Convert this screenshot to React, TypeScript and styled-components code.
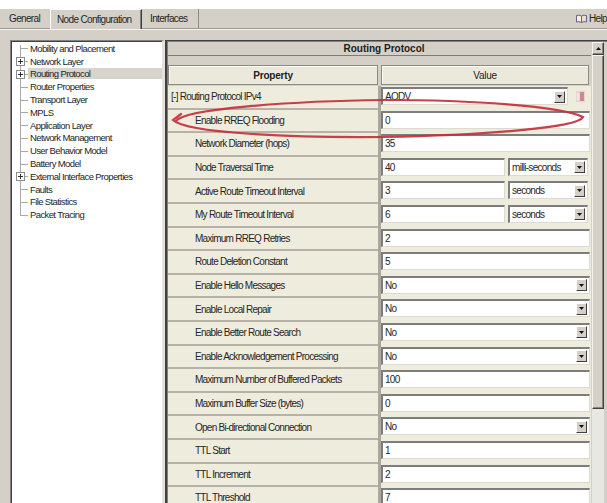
import React from "react";
import styled, { createGlobalStyle } from "styled-components";

const UI = `"Liberation Sans", Arial, sans-serif`;

const GlobalStyle = createGlobalStyle`
  html, body { margin: 0; padding: 0; background: #d4d0c8; }
  #root { width: 607px; height: 503px; }
`;

const Window = styled.div`
  position: relative;
  width: 607px;
  height: 503px;
  overflow: hidden;
  display: flex;
  flex-direction: column;
  background: #d4d0c8;
  font-family: ${UI};
  font-size: 9.5px;
  letter-spacing: -0.62px;
  color: #262626;
`;

const TopStrip = styled.div`
  flex: none;
  height: 9px;
  background: #ffffff;
`;

/* ---------- tab strip ---------- */

const TabBar = styled.div`
  flex: none;
  height: 19px;
  display: flex;
  align-items: stretch;
  border-bottom: 1px solid #9b988f;
`;

const Tab = styled.div<{ $active?: boolean; $w: number; $pad: number }>`
  position: relative;
  box-sizing: border-box;
  width: ${(p) => p.$w}px;
  padding-left: ${(p) => p.$pad}px;
  display: flex;
  align-items: center;
  font-size: 10px;
  letter-spacing: -0.65px;
  white-space: nowrap;
  background: #d4d0c8;
  ${(p) =>
    p.$active
      ? `
    border-top: 1px solid #ffffff;
    border-left: 1px solid #ffffff;
    border-right: 1px solid #404040;
    box-shadow: inset -1px 0 0 #808080;
    margin-bottom: -1px;
  `
      : `
    border-right: 1px solid #8f8c84;
  `}
`;

const PlainTab = styled(Tab)`
  border-right: none;
`;

const TabFill = styled.div`
  flex: 1;
`;

const HelpLink = styled.div`
  display: flex;
  align-items: center;
  gap: 2px;
  font-size: 10px;
  letter-spacing: -0.65px;
  white-space: nowrap;
`;

/* ---------- body ---------- */

const Body = styled.div`
  flex: 1;
  min-height: 0;
  display: flex;
  border-top: 1px solid #f3f2ec;
  padding: 10px 0 0 10px;
`;

const TreePanel = styled.div`
  flex: none;
  box-sizing: border-box;
  width: 155px;
  background: #ffffff;
  border-top: 1px solid #808080;
  border-left: 1px solid #808080;
  border-right: 3px solid #e4e2da;
  box-shadow: inset 1px 1px 0 #404040;
  padding: 1px 0 0 1px;
  display: flex;
  flex-direction: column;
`;

const TreeRow = styled.div`
  height: 12.8px;
  display: flex;
  align-items: center;
`;

const Connector = styled.div<{ $first?: boolean; $last?: boolean }>`
  position: relative;
  flex: none;
  width: 16px;
  align-self: stretch;

  &::before {
    content: "";
    position: absolute;
    left: 8px;
    top: ${(p) => (p.$first ? "3px" : "0")};
    bottom: ${(p) => (p.$last ? "50%" : "0")};
    border-left: 1px solid #a9a9a9;
  }

  &::after {
    content: "";
    position: absolute;
    left: 8px;
    top: 50%;
    width: 8px;
    border-top: 1px solid #a9a9a9;
  }
`;

const Expander = styled.svg`
  position: absolute;
  left: 4px;
  top: 50%;
  margin-top: -4px;
  z-index: 1;
`;

const TreeLabel = styled.div<{ $selected?: boolean }>`
  flex: 1;
  height: 11px;
  line-height: 11px;
  padding-left: 2px;
  white-space: nowrap;
  color: #262626;
  background: ${(p) => (p.$selected ? "#d7d4cc" : "transparent")};
`;

/* ---------- property sheet ---------- */

const RightPanel = styled.div`
  flex: 1;
  min-width: 0;
  display: flex;
  border-top: 1px solid #404040;
  border-left: 2px solid #404040;
  box-shadow: inset 1px 1px 0 #808080;
  padding: 1px 0 0 1px;
`;

const Sheet = styled.div`
  flex: 1;
  min-width: 0;
  display: flex;
  flex-direction: column;
`;

const TitleBar = styled.div`
  flex: none;
  height: 13px;
  border-bottom: 1px solid #7f7c74;
  display: flex;
  align-items: center;
  justify-content: center;
  padding-left: 9px;
  font-weight: bold;
  font-size: 10px;
  letter-spacing: 0;
  color: #202020;
`;

const HeaderRow = styled.div`
  flex: none;
  margin-top: 9px;
  height: 20px;
  display: grid;
  grid-template-columns: 210px 1fr;
  column-gap: 3px;
  padding-right: 2px;
`;

const HeaderCell = styled.div<{ $bold?: boolean }>`
  box-sizing: border-box;
  display: flex;
  align-items: center;
  justify-content: center;
  background: #ebe9dc;
  border: 1px solid #8d8a80;
  box-shadow: inset 1px 1px 0 #fbfaf4;
  font-size: 10px;
  letter-spacing: ${(p) => (p.$bold ? "-0.2px" : "-0.3px")};
  font-weight: ${(p) => (p.$bold ? "bold" : "normal")};
  color: #222;
`;

const Rows = styled.div`
  flex: none;
  margin-top: 1px;
  display: flex;
  flex-direction: column;
`;

const Row = styled.div`
  flex: none;
  height: 23.6px;
  display: grid;
  grid-template-columns: 210px 1fr;
  column-gap: 3px;
  background: #aaa79b;
`;

const PropCell = styled.div<{ $group?: boolean }>`
  display: flex;
  align-items: center;
  padding-left: ${(p) => (p.$group ? "3px" : "27px")};
  background: #eeecdd;
  border-bottom: 2px solid #b6b3a6;
  white-space: nowrap;
  font-size: 10px;
  letter-spacing: -0.74px;
  color: #262626;
`;

const ValueCell = styled.div`
  display: flex;
  align-items: flex-start;
  gap: 3px;
  padding: 1px 1px 0 0;
  background: #eeecdd;
`;

const Field = styled.div<{ $w?: number }>`
  box-sizing: border-box;
  height: 18px;
  ${(p) => (p.$w ? `width: ${p.$w}px; flex: none;` : "flex: 1;")}
  min-width: 0;
  display: flex;
  align-items: center;
  padding-left: 2px;
  background: #ffffff;
  border-top: 2px solid #7d7d7d;
  border-left: 2px solid #7d7d7d;
  border-bottom: 1px solid #dcdad2;
  border-right: 1px solid #dcdad2;
  white-space: nowrap;
  font-size: 10px;
  letter-spacing: -0.7px;
  color: #262626;
`;

const FieldText = styled.span`
  flex: 1;
  overflow: hidden;
`;

const DropButton = styled.div`
  flex: none;
  box-sizing: border-box;
  width: 11px;
  height: 12px;
  margin-right: 2px;
  display: flex;
  align-items: center;
  justify-content: center;
  background: #d4d0c8;
  border-top: 1px solid #ffffff;
  border-left: 1px solid #ffffff;
  border-right: 1px solid #404040;
  border-bottom: 1px solid #404040;
`;

const SideIcon = styled.div`
  flex: 1;
  display: flex;
  justify-content: center;
  padding-top: 4px;
`;

/* ---------- scroll bar ---------- */

const ScrollColumn = styled.div`
  flex: none;
  width: 12px;
  margin: 0 3px 0 1px;
  display: flex;
  flex-direction: column;
`;

const Bevel = styled.div`
  box-sizing: border-box;
  background: #d4d0c8;
  border-top: 1px solid #f6f5f0;
  border-left: 1px solid #f6f5f0;
  border-right: 1px solid #404040;
  border-bottom: 1px solid #404040;
  box-shadow: inset -1px -1px 0 #8a877f;
`;

const ScrollButton = styled(Bevel)`
  flex: none;
  height: 13px;
  display: flex;
  align-items: center;
  justify-content: center;
`;

const ScrollThumb = styled(Bevel)`
  flex: none;
  height: 354px;
`;

const ScrollTrack = styled.div`
  flex: 1;
  background: #e9e7e1;
`;

const Annotation = styled.svg`
  position: absolute;
  left: 0;
  top: 0;
  pointer-events: none;
`;

/* ---------- data ---------- */

type TreeNode = { label: string; expandable?: boolean; selected?: boolean };

const treeNodes: TreeNode[] = [
  { label: "Mobility and Placement" },
  { label: "Network Layer", expandable: true },
  { label: "Routing Protocol", expandable: true, selected: true },
  { label: "Router Properties" },
  { label: "Transport Layer" },
  { label: "MPLS" },
  { label: "Application Layer" },
  { label: "Network Management" },
  { label: "User Behavior Model" },
  { label: "Battery Model" },
  { label: "External Interface Properties", expandable: true },
  { label: "Faults" },
  { label: "File Statistics" },
  { label: "Packet Tracing" },
];

type PropValue =
  | { kind: "text"; value: string }
  | { kind: "select"; value: string }
  | { kind: "unit"; value: string; unit: string }
  | { kind: "protocol"; value: string };

type Property = { name: string; group?: boolean; value: PropValue };

const properties: Property[] = [
  { name: "[-] Routing Protocol IPv4", group: true, value: { kind: "protocol", value: "AODV" } },
  { name: "Enable RREQ Flooding", value: { kind: "text", value: "0" } },
  { name: "Network Diameter (hops)", value: { kind: "text", value: "35" } },
  { name: "Node Traversal Time", value: { kind: "unit", value: "40", unit: "milli-seconds" } },
  { name: "Active Route Timeout Interval", value: { kind: "unit", value: "3", unit: "seconds" } },
  { name: "My Route Timeout Interval", value: { kind: "unit", value: "6", unit: "seconds" } },
  { name: "Maximum RREQ Retries", value: { kind: "text", value: "2" } },
  { name: "Route Deletion Constant", value: { kind: "text", value: "5" } },
  { name: "Enable Hello Messages", value: { kind: "select", value: "No" } },
  { name: "Enable Local Repair", value: { kind: "select", value: "No" } },
  { name: "Enable Better Route Search", value: { kind: "select", value: "No" } },
  { name: "Enable Acknowledgement Processing", value: { kind: "select", value: "No" } },
  { name: "Maximum Number of Buffered Packets", value: { kind: "text", value: "100" } },
  { name: "Maximum Buffer Size (bytes)", value: { kind: "text", value: "0" } },
  { name: "Open Bi-directional Connection", value: { kind: "select", value: "No" } },
  { name: "TTL Start", value: { kind: "text", value: "1" } },
  { name: "TTL Increment", value: { kind: "text", value: "2" } },
  { name: "TTL Threshold", value: { kind: "text", value: "7" } },
];

/* ---------- small drawings ---------- */

const DownArrow = () => (
  <svg width="5" height="3" viewBox="0 0 5 3">
    <path d="M0 0h5L2.5 3z" fill="#111" />
  </svg>
);

const UpArrow = () => (
  <svg width="5" height="3" viewBox="0 0 5 3">
    <path d="M0 3h5L2.5 0z" fill="#111" />
  </svg>
);

const PlusBox = () => (
  <Expander width="9" height="9" viewBox="0 0 9 9">
    <rect x="0.5" y="0.5" width="8" height="8" fill="#fff" stroke="#8c8c8c" />
    <path d="M2 4.5h5M4.5 2v5" stroke="#333" strokeWidth="1" />
  </Expander>
);

const BookIcon = () => (
  <svg width="11" height="9" viewBox="0 0 11 9">
    <path d="M0.5 1.5Q3 0.5 5.5 2V8.5Q3 7 0.5 8z" fill="#f4efe2" stroke="#6e5e86" />
    <path d="M10.5 1.5Q8 0.5 5.5 2V8.5Q8 7 10.5 8z" fill="#e8e0cc" stroke="#6e5e86" />
  </svg>
);

const ProtocolIcon = () => (
  <svg width="9" height="11" viewBox="0 0 9 11">
    <rect x="0" y="0" width="9" height="11" fill="#e9d2d2" />
    <rect x="4" y="1" width="4" height="9" fill="#c98a90" />
    <rect x="1" y="2" width="2" height="7" fill="#f3e6e6" />
  </svg>
);

const Dropdown = ({ value, width }: { value: string; width?: number }) => (
  <Field $w={width}>
    <FieldText>{value}</FieldText>
    <DropButton>
      <DownArrow />
    </DropButton>
  </Field>
);

const ValueEditor = ({ v }: { v: PropValue }) => {
  switch (v.kind) {
    case "text":
      return (
        <ValueCell>
          <Field>
            <FieldText>{v.value}</FieldText>
          </Field>
        </ValueCell>
      );
    case "select":
      return (
        <ValueCell>
          <Dropdown value={v.value} />
        </ValueCell>
      );
    case "unit":
      return (
        <ValueCell>
          <Field $w={124}>
            <FieldText>{v.value}</FieldText>
          </Field>
          <Dropdown value={v.unit} width={80} />
        </ValueCell>
      );
    case "protocol":
      return (
        <ValueCell>
          <Dropdown value={v.value} width={187} />
          <SideIcon>
            <ProtocolIcon />
          </SideIcon>
        </ValueCell>
      );
  }
};

export default function App() {
  return (
    <>
      <GlobalStyle />
      <Window>
        <TopStrip />
        <TabBar>
          <PlainTab $w={50} $pad={9}>General</PlainTab>
          <Tab $active $w={92} $pad={6}>Node Configuration</Tab>
          <Tab $w={57} $pad={8}>Interfaces</Tab>
          <TabFill />
          <HelpLink>
            <BookIcon />
            Help
          </HelpLink>
        </TabBar>

        <Body>
          <TreePanel>
            {treeNodes.map((n, i) => (
              <TreeRow key={n.label}>
                <Connector $first={i === 0} $last={i === treeNodes.length - 1}>
                  {n.expandable && <PlusBox />}
                </Connector>
                <TreeLabel $selected={n.selected}>{n.label}</TreeLabel>
              </TreeRow>
            ))}
          </TreePanel>

          <RightPanel>
            <Sheet>
              <TitleBar>Routing Protocol</TitleBar>
              <HeaderRow>
                <HeaderCell $bold>Property</HeaderCell>
                <HeaderCell>Value</HeaderCell>
              </HeaderRow>
              <Rows>
                {properties.map((p) => (
                  <Row key={p.name}>
                    <PropCell $group={p.group}>{p.name}</PropCell>
                    <ValueEditor v={p.value} />
                  </Row>
                ))}
              </Rows>
            </Sheet>
            <ScrollColumn>
              <ScrollButton>
                <UpArrow />
              </ScrollButton>
              <ScrollThumb />
              <ScrollTrack />
            </ScrollColumn>
          </RightPanel>
        </Body>

        <Annotation width="607" height="503" viewBox="0 0 607 503">
          <path
            d="M176 121 C184 109 290 101 384 100 C472 100 560 106 583 117 C578 128 482 135 384 137 C292 138 186 133 173 120 L181 114"
            fill="none"
            stroke="#c42f3c"
            strokeWidth="2.2"
            strokeLinecap="round"
            opacity="0.92"
          />
        </Annotation>
      </Window>
    </>
  );
}
